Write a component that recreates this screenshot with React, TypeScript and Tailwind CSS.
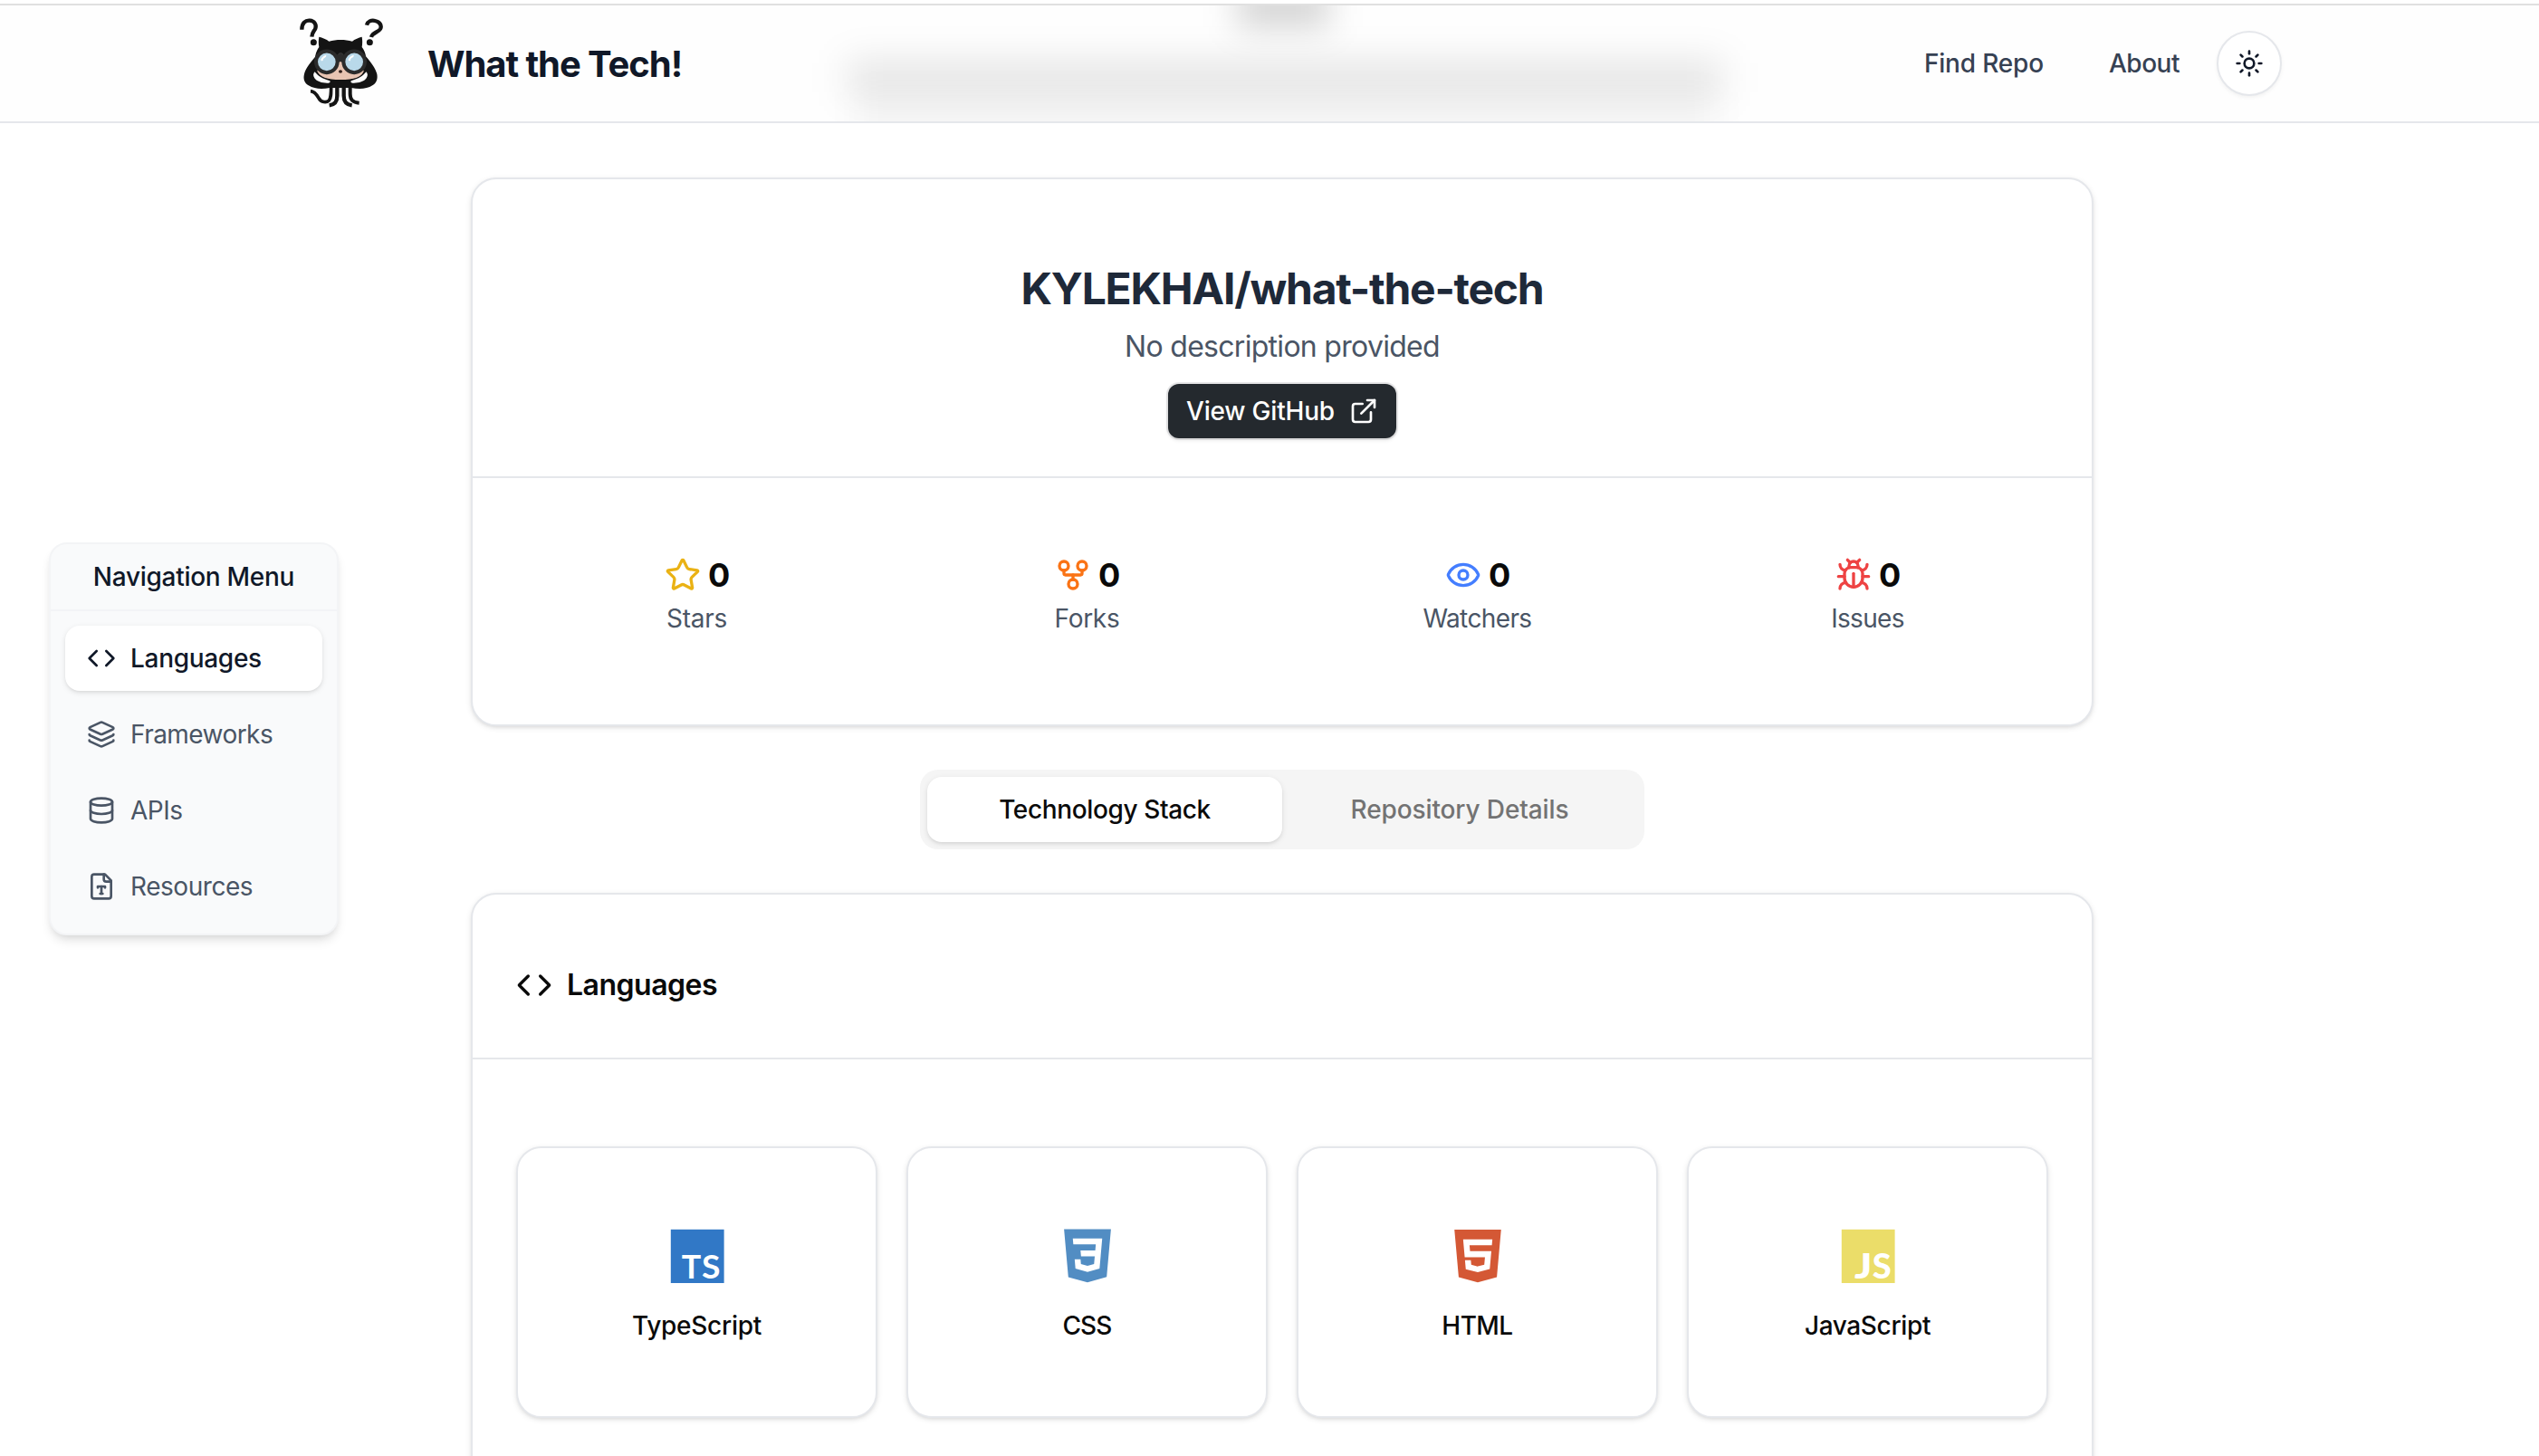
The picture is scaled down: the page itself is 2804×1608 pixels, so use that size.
import type { ReactNode } from "react";
import {
  Bug,
  Code,
  Database,
  ExternalLink,
  Eye,
  GitFork,
  Layers,
  Star,
  Sun,
} from "lucide-react";

function Mascot() {
  return (
    <svg viewBox="90 58 282 300" className="h-[100px] w-[94px]" fill="none">
      {/* question marks */}
      <g stroke="#141414" strokeWidth="13">
        <path d="M100 99C100 77 112 68 126 69C142 70 149 83 145 95C142 104 134 107 133 123" />
        <path d="M315 84C318 72 330 67 343 70C358 73 366 86 360 97C353 109 335 107 330 124" />
      </g>
      <circle cx="139" cy="141" r="10.5" fill="#141414" />
      <circle cx="325" cy="141" r="10.5" fill="#141414" />
      {/* arms */}
      <path
        d="M146 188C130 205 112 230 108 246C104 262 108 275 122 284C142 296 166 298 192 292L264 292C290 298 316 296 334 284C348 275 352 262 349 246C345 230 328 205 312 188Z"
        fill="#141414"
      />
      {/* head and ears */}
      <path
        d="M157 123C167 125 182 131 190 138C214 131 244 131 267 138C275 131 289 125 299 123C301 133 301 146 299 157C310 170 315 190 313 212C312 248 284 268 228 268C172 268 144 248 143 212C142 190 147 170 157 157C155 146 155 133 157 123Z"
        fill="#141414"
      />
      {/* gaps between arms and face */}
      <path d="M143 239C152 252 168 262 193 269C197 272 194 275 188 276C170 277 150 272 142 260C137 252 137 244 143 239Z" fill="#fefefe" />
      <path d="M313 239C304 252 288 262 263 269C259 272 262 275 268 276C286 277 306 272 314 260C319 252 319 244 313 239Z" fill="#fefefe" />
      {/* face */}
      <path
        d="M228 203C240 212 262 240 306 234C300 256 274 265 228 265C184 265 158 256 150 234C194 240 216 212 228 203Z"
        fill="#e8c4b2"
      />
      <ellipse cx="228" cy="238" rx="6" ry="5.5" fill="#33201b" />
      {/* tentacles */}
      <g stroke="#141414" strokeWidth="13">
        <path d="M129 303C142 304 149 314 156 326C164 341 182 342 190 334C197 326 197 310 197 286" strokeWidth="11" />
        <path d="M217 286V318C217 336 212 347 191 350" />
        <path d="M239 286V318C239 336 245 347 266 350" />
        <path d="M260 286V312C260 332 268 340 290 342" strokeWidth="12" />
      </g>
      <path d="M194 268H262V292H194Z" fill="#141414" />
      {/* goggles */}
      <path d="M214 188C218 176 238 176 242 188V206H214Z" fill="#2b2b2b" />
      <path d="M220 182C224 176 233 176 237 182" stroke="#4a4a4a" strokeWidth="2.5" />
      <circle cx="182.500" cy="206" r="35.500" fill="#b9d9ea" stroke="#2b2b2b" strokeWidth="12" />
      <circle cx="273.500" cy="206" r="35.500" fill="#b9d9ea" stroke="#2b2b2b" strokeWidth="12" />
      <path d="M164 200C166 192 172 187 180 185L178 190C172 192 169 196 168 202Z" fill="#fff" stroke="#fff" strokeWidth="3" />
      <path d="M255 200C257 192 263 187 271 185L269 190C263 192 260 196 259 202Z" fill="#fff" stroke="#fff" strokeWidth="3" />
    </svg>
  );
}

function FileTypeIcon({ className }: { className?: string }) {
  return (
    <svg
      viewBox="0 0 24 24"
      className={className}
      fill="none"
      stroke="currentColor"
      strokeWidth="2"
      strokeLinecap="round"
      strokeLinejoin="round"
    >
      <path d="M15 2H6a2 2 0 0 0-2 2v16a2 2 0 0 0 2 2h12a2 2 0 0 0 2-2V7Z" />
      <path d="M14 2v4a2 2 0 0 0 2 2h4" />
      <path d="M9 13v-1h6v1" />
      <path d="M12 12v6" />
      <path d="M11 18h2" />
    </svg>
  );
}

function TypeScriptLogo() {
  return (
    <svg viewBox="0 0 60 60" className="size-[60px] overflow-visible">
      <rect x=".8" y=".8" width="58.800" height="59.200" fill="#3178c6" />
      <g fill="#fff" fontFamily="Lato" fontWeight="700" fontSize="37">
        <text x="12.700" y="55.200" textLength="21.500" lengthAdjust="spacingAndGlyphs">T</text>
        <text x="35" y="55.200" textLength="20.500" lengthAdjust="spacingAndGlyphs">S</text>
      </g>
    </svg>
  );
}

function JavaScriptLogo() {
  return (
    <svg viewBox="0 0 60 60" className="size-[60px] overflow-visible">
      <rect x=".8" y=".8" width="58.800" height="59.200" fill="#ebdd69" />
      <g fill="#fff" fontFamily="Lato" fontWeight="900" fontSize="37">
        <text x="15" y="54.800" textLength="19.500" lengthAdjust="spacingAndGlyphs">J</text>
        <text x="34.800" y="54.800" textLength="21" lengthAdjust="spacingAndGlyphs">S</text>
      </g>
    </svg>
  );
}

function CssLogo() {
  return (
    <svg viewBox="0 0 128 128" className="size-[60px]" fill="#528dc3">
      <path d="M8.76 1l10.055 112.883 45.118 12.58 45.244-12.626L119.24 1H8.76zm89.591 25.862l-3.347 37.605.01.203-.014.467v-.004l-2.378 26.294-.262 2.336L64 101.607v.001l-.022.019-28.311-7.888L33.75 72h13.883l.985 11.054 15.386 4.17-.004.008v-.002l15.443-4.229L81.075 65H48.792l-.277-3.043-.631-7.129L47.553 51h34.749l1.264-14H30.64l-.277-3.041-.63-7.131L29.401 23h69.281l-.331 3.862z" />
    </svg>
  );
}

function HtmlLogo() {
  return (
    <svg viewBox="0 0 128 128" className="size-[60px]" fill="#d45835">
      <path d="M9.032 2l10.005 112.093 44.896 12.401 45.02-12.387L118.968 2H9.032zm89.126 26.539l-.627 7.172L97.255 39H44.59l1.257 14h50.156l-.336 3.471-3.233 36.119-.238 2.27L64 102.609v.002l-.034.018-28.177-7.423L33.876 74h13.815l.979 10.919L63.957 89H64v-.546l15.355-3.875L80.959 67H33.261l-3.383-38.117L29.549 25h68.939l-.33 3.539z" />
    </svg>
  );
}

function Header() {
  return (
    <header className="relative flex h-[132px] items-center overflow-hidden border-t-2 border-b-2 border-t-[#e0e0e0] border-b-gray-200 bg-[#fefefe] pr-[284px] pl-[330px]">
      {/* page content showing through the frosted bar */}
      <div className="absolute top-[62px] left-[936px] h-[36px] w-[966px] bg-black/11 blur-[20px]" />
      <div className="absolute top-[96px] left-[946px] h-[50px] w-[950px] bg-black/3 blur-[16px]" />
      <div className="absolute -top-[20px] left-[1366px] h-[44px] w-[102px] bg-black/17 blur-[18px]" />
      <div className="relative flex flex-1 items-center">
        <div className="-mt-0.5">
          <Mascot />
        </div>
        <span className="mt-0.5 ml-12 text-[40px] leading-[56px] font-bold tracking-[-1.07px] text-gray-900">
          What the Tech!
        </span>
        <nav className="ml-auto flex items-center text-[28px] leading-10 font-medium text-gray-700">
          <a className="mr-[72px] tracking-[-0.17px]">Find Repo</a>
          <a className="mr-[41px] tracking-[-0.48px]">About</a>
        </nav>
        <button className="flex size-[72px] items-center justify-center rounded-full border-2 border-gray-200 bg-white text-gray-900 shadow-[0_2px_4px_rgba(0,0,0,0.05)]">
          <Sun className="size-8" />
        </button>
      </div>
    </header>
  );
}

const navItems = [
  { label: "Frameworks", icon: <Layers className="size-8" />, tracking: "tracking-[-0.55px]" },
  { label: "APIs", icon: <Database className="size-8" />, tracking: "tracking-[-0.5px]" },
  { label: "Resources", icon: <FileTypeIcon className="size-8" />, tracking: "tracking-[-0.45px]" },
];

function Sidebar() {
  return (
    <aside className="mt-[463px] ml-[54px] h-[434px] w-[320px] shrink-0 rounded-[20px] border-2 border-gray-100 bg-gray-50 text-[28px] leading-10 shadow-[0_8px_12px_-2px_rgba(0,0,0,0.1),0_4px_8px_-4px_rgba(0,0,0,0.1)]">
      <div className="flex h-[74px] items-center justify-center border-b-2 border-gray-100 font-medium tracking-[-0.28px] text-gray-900">
        Navigation Menu
      </div>
      <div className="flex flex-col gap-3 p-4">
        <div className="flex h-[72px] items-center gap-4 rounded-2xl bg-white pl-6 font-medium tracking-[-0.3px] text-gray-900 shadow-[0_2px_6px_rgba(0,0,0,0.1),0_2px_4px_-2px_rgba(0,0,0,0.1)]">
          <Code className="size-8" />
          Languages
        </div>
        {navItems.map((item) => (
          <div key={item.label} className="flex h-[72px] items-center gap-4 pl-6 text-gray-600">
            {item.icon}
            <span className={item.tracking}>{item.label}</span>
          </div>
        ))}
      </div>
    </aside>
  );
}

function Card({ children, className = "" }: { children: ReactNode; className?: string }) {
  return (
    <section
      className={`rounded-[28px] border-2 border-gray-200 bg-white shadow-[0_2px_6px_rgba(0,0,0,0.1),0_2px_4px_-2px_rgba(0,0,0,0.1)] ${className}`}
    >
      {children}
    </section>
  );
}

const stats = [
  { label: "Stars", icon: <Star className="size-10 text-[#eab214]" />, tracking: "tracking-[-0.26px]" },
  { label: "Forks", icon: <GitFork className="size-10 text-[#fa7315]" />, tracking: "tracking-[-0.3px]" },
  { label: "Watchers", icon: <Eye className="size-10 text-[#447eff]" />, tracking: "tracking-[-0.61px]" },
  { label: "Issues", icon: <Bug className="size-10 text-[#ee4343]" />, tracking: "tracking-[-0.69px]" },
];

const languages = [
  { label: "TypeScript", logo: <TypeScriptLogo />, tracking: "tracking-[-0.25px]" },
  { label: "CSS", logo: <CssLogo />, tracking: "tracking-[-0.9px]" },
  { label: "HTML", logo: <HtmlLogo />, tracking: "tracking-[-0.56px]" },
  { label: "JavaScript", logo: <JavaScriptLogo />, tracking: "tracking-[-0.35px]" },
];

export default function App() {
  return (
    <div className="h-[1608px] overflow-hidden bg-white pt-1 font-['Inter',sans-serif] text-neutral-950">
      <Header />
      <div className="flex items-start">
        <Sidebar />
        <main className="mt-[60px] ml-[146px] flex w-[1792px] shrink-0 flex-col">
          <Card>
            <div className="flex flex-col items-center border-b-2 border-gray-200 pt-[89px] pb-[42px]">
              <h1 className="text-[48px] leading-[64px] font-bold tracking-[-1.26px] text-gray-800">
                KYLEKHAI/what-the-tech
              </h1>
              <p className="mt-1 text-[32px] leading-[56px] tracking-[-0.71px] text-gray-600">
                No description provided
              </p>
              <a className="mt-[13px] flex h-[60px] w-[252px] items-center gap-4 rounded-xl bg-[#24292e] pl-5 text-[28px] leading-10 font-medium tracking-[-0.2px] whitespace-nowrap text-white shadow-[0_0_0_2px_rgba(27,31,36,0.1),0_2px_4px_rgba(0,0,0,0.1)]">
                View GitHub
                <ExternalLink className="size-8" />
              </a>
            </div>
            <div className="grid grid-cols-4 gap-8 px-12 pt-[79px] pb-[97px]">
              {stats.map((s) => (
                <div key={s.label} className="flex flex-col items-center">
                  <div className="flex h-14 items-center gap-2 text-[36px] leading-[56px] font-bold tracking-[-1px]">
                    {s.icon}
                    <span className="w-[23px]">0</span>
                  </div>
                  <div className={`text-[28px] leading-10 text-gray-600 ${s.tracking}`}>{s.label}</div>
                </div>
              ))}
            </div>
          </Card>

          <div className="mt-12 flex h-[88px] w-[800px] self-center rounded-[20px] bg-neutral-100 p-2 text-[28px] font-medium">
            <div className="flex h-[72px] flex-1 items-center justify-center rounded-2xl bg-white tracking-[-0.37px] shadow-[0_2px_6px_rgba(0,0,0,0.1),0_2px_4px_-2px_rgba(0,0,0,0.1)]">
              Technology Stack
            </div>
            <div className="flex h-[72px] flex-1 items-center justify-center tracking-[-0.12px] text-neutral-500">
              Repository Details
            </div>
          </div>

          <Card className="mt-12 h-[720px]">
            <div className="flex h-[182px] items-center gap-4 border-b-2 border-gray-200 pt-[20px] pl-12">
              <Code className="size-10" />
              <h2 className="text-[32px] leading-[48px] font-semibold tracking-[-0.5px]">Languages</h2>
            </div>
            <div className="grid grid-cols-4 gap-8 px-12 pt-24">
              {languages.map((l) => (
                <Card key={l.label} className="flex h-[300px] flex-col items-center pt-[89px]">
                  {l.logo}
                  <div className={`mt-[27px] text-[28px] leading-10 font-medium ${l.tracking}`}>{l.label}</div>
                </Card>
              ))}
            </div>
          </Card>
        </main>
      </div>
    </div>
  );
}
